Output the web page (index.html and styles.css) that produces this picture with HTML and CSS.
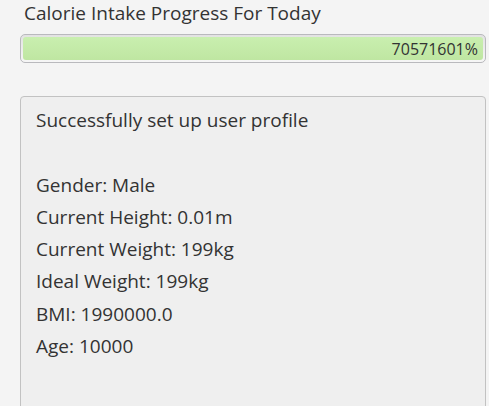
FILE: index.html
```html
<!DOCTYPE html>
<html>
<head>
<meta charset="utf-8">
<link rel="stylesheet" href="styles.css">
</head>
<body>
<div class="page">
  <div class="title">Calorie Intake Progress For Today</div>
  <div class="bar">
    <div class="fill"><span class="pct">70571601%</span></div>
  </div>
  <div class="textarea">
    <div class="line">Successfully set up user profile</div>
    <div class="line">&nbsp;</div>
    <div class="line">Gender: Male</div>
    <div class="line">Current Height: 0.01m</div>
    <div class="line">Current Weight: 199kg</div>
    <div class="line">Ideal Weight: 199kg</div>
    <div class="line">BMI: 1990000.0</div>
    <div class="line">Age: 10000</div>
  </div>
</div>
</body>
</html>
```
FILE: styles.css
```css
html, body {
  margin: 0;
  padding: 0;
  background: #f4f4f4;
  overflow: hidden;
}
.page {
  width: 489px;
  height: 406px;
  overflow: hidden;
  font-family: "Open Sans", "Noto Sans", sans-serif;
  color: #333333;
}
.title {
  margin-left: 24px;
  font-size: 19px;
  line-height: 26px;
}
.bar {
  margin: 8px 0 0 20px;
  width: 466px;
  height: 29px;
  box-sizing: border-box;
  border: 1px solid #b9b9bd;
  border-radius: 5px;
  background: linear-gradient(#e2e2e2, #f6f6f6);
  padding: 2px;
}
.fill {
  height: 100%;
  border-radius: 3px;
  background: linear-gradient(#c9efaf, #bfe6a2);
  display: flex;
  align-items: center;
  justify-content: flex-end;
  padding-right: 5px;
  box-sizing: border-box;
}
.pct {
  font-size: 16px;
  line-height: 20px;
}
.textarea {
  margin: 33px 0 0 20px;
  width: 466px;
  height: 330px;
  box-sizing: border-box;
  border: 1px solid #c2c2c2;
  border-radius: 4px;
  background: #efefef;
  padding: 7px 0 0 15px;
}
.line {
  font-size: 19px;
  line-height: 32.3px;
}
```
